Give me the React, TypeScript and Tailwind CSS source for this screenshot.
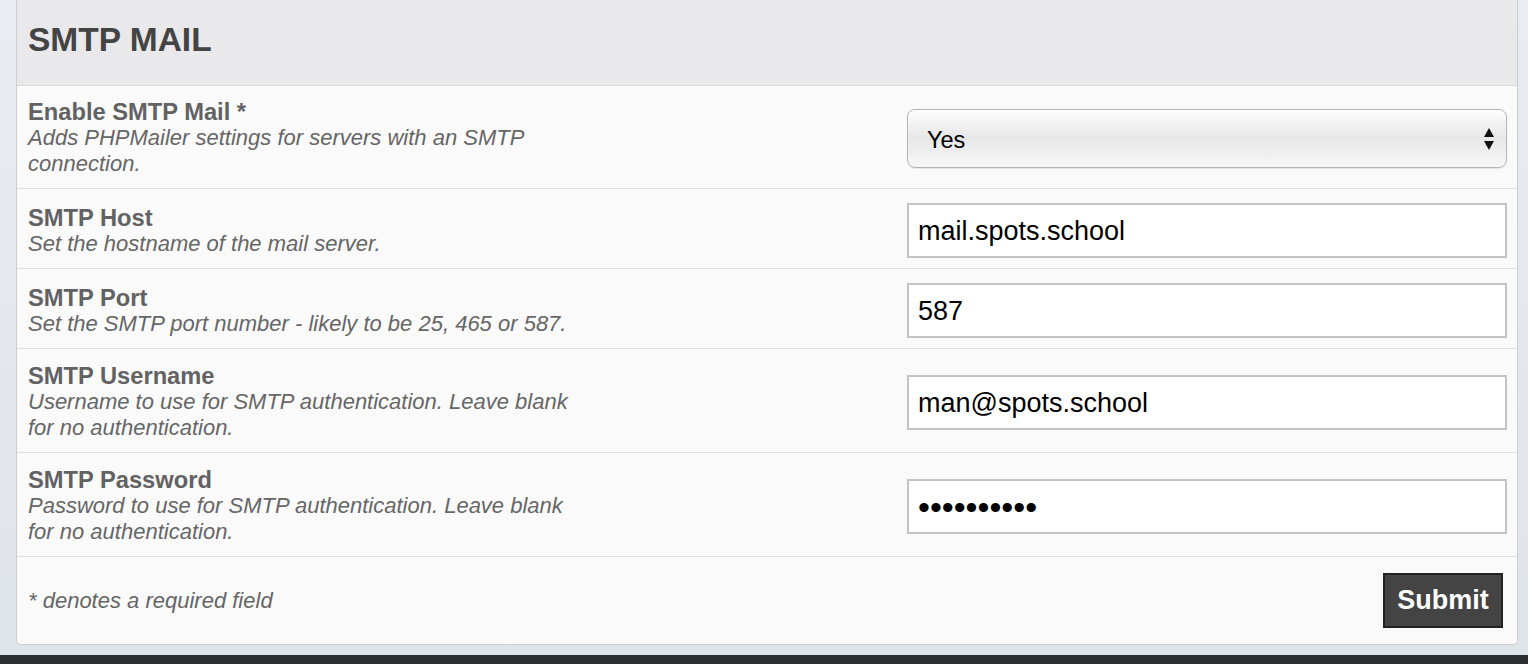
import React from 'react';

type Field = {
  id: string;
  label: string;
  help: string;
  kind: 'select' | 'text' | 'password';
  value: string;
  pad: string;
};

const fields: Field[] = [
  { id: 'enable', label: 'Enable SMTP Mail *', help: 'Adds PHPMailer settings for servers with an SMTP connection.', kind: 'select', value: 'Yes', pad: 'pt-[13px] pb-[11px]' },
  { id: 'host', label: 'SMTP Host', help: 'Set the hostname of the mail server.', kind: 'text', value: 'mail.spots.school', pad: 'pt-[14px] pb-[10px]' },
  { id: 'port', label: 'SMTP Port', help: 'Set the SMTP port number - likely to be 25, 465 or 587.', kind: 'text', value: '587', pad: 'pt-[14px] pb-[10px]' },
  { id: 'user', label: 'SMTP Username', help: 'Username to use for SMTP authentication. Leave blank for no authentication.', kind: 'text', value: 'man@spots.school', pad: 'pt-[14px] pb-[11px]' },
  { id: 'pass', label: 'SMTP Password', help: 'Password to use for SMTP authentication. Leave blank for no authentication.', kind: 'password', value: 'abcdefghij', pad: 'pt-[14px] pb-[11px]' },
];

const FieldInput: React.FC<{ field: Field }> = ({ field }) => {
  if (field.kind === 'select') {
    return (
      <div className="relative w-[600px]">
        <select
          defaultValue={field.value}
          className="w-full h-[59px] appearance-none rounded-[8px] border border-[#b4b4b4] bg-linear-to-b from-[#fdfdfd] via-[#e7e7e7] to-[#f7f7f7] pl-[19px] pt-[5px] text-[23.5px] text-black shadow-[inset_0_1px_1px_rgba(255,255,255,0.9),0_1px_1px_rgba(0,0,0,0.08)] outline-none"
        >
          <option>Yes</option>
          <option>No</option>
        </select>
        {/* up / down arrows */}
        <svg className="absolute right-[13px] top-[18px] pointer-events-none" width="10" height="24" viewBox="0 0 10 24">
          <polygon points="5,1 10,10 0,10" fill="#111" />
          <polygon points="0,14 10,14 5,23" fill="#111" />
        </svg>
      </div>
    );
  }
  if (field.kind === 'password') {
    return (
      <input
        type="password"
        defaultValue={field.value}
        className="w-[600px] h-[55px] border-2 border-[#c3c3c3] bg-white px-[9px] pt-[2px] text-[34px] text-black outline-none"
      />
    );
  }
  return (
    <input
      type="text"
      defaultValue={field.value}
      className="w-[600px] h-[55px] border-2 border-[#c3c3c3] bg-white px-[9px] pt-[2px] text-[27px] text-black outline-none"
    />
  );
};

const App: React.FC = () => {
  return (
    <div className="w-[1528px] h-[664px] overflow-hidden flex flex-col bg-linear-to-b from-[#e9ecf1] to-[#dfe3ea] font-['Liberation_Sans',Arial,sans-serif]">
      <div className="flex-1 flex pl-4 pr-[10px]">
        <div className="w-[1502px] self-start border-x border-b border-[#cdcdcd] rounded-b-[5px] overflow-hidden bg-[#fafafa]">
          {/* Header */}
          <div className="h-[86px] flex items-center pl-[11px] pb-1 bg-[#e9e9eb] border-b border-[#dadada]">
            <h1 className="text-[33.5px] font-bold text-[#444]">SMTP MAIL</h1>
          </div>

          {/* Rows */}
          {fields.map((field) => (
            <div key={field.id} className={`flex items-center justify-between pl-[11px] pr-[10px] border-b border-[#e0e0e0] ${field.pad}`}>
              <div className="w-[556px] leading-[26px] text-[#666]">
                <div className="text-[23.7px] font-bold text-[#626262]">{field.label}</div>
                <div className="text-[22px] italic">{field.help}</div>
              </div>
              <FieldInput field={field} />
            </div>
          ))}

          {/* Footer */}
          <div className="flex items-center justify-between pl-[11px] pr-[14px] py-4">
            <span className="text-[22px] italic text-[#666]">* denotes a required field</span>
            <button className="h-[55px] w-[120px] bg-[#444] border-2 border-[#222] text-white text-[27px] font-bold">
              Submit
            </button>
          </div>
        </div>
      </div>
      <div className="h-[9px] bg-[#2b2e31]" />
    </div>
  );
};

export default App;
